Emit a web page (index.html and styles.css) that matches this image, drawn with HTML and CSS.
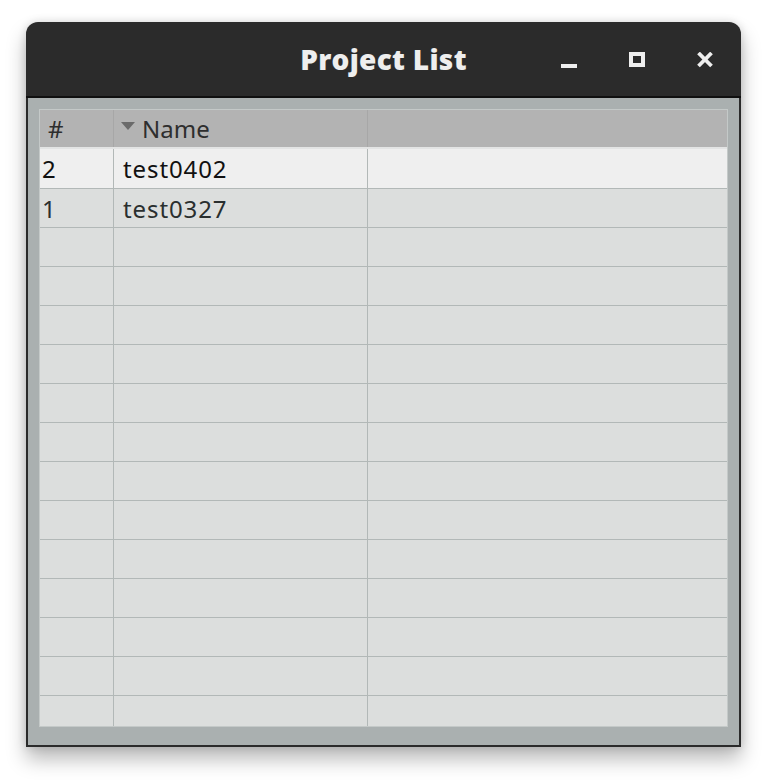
FILE: index.html
```html
<!DOCTYPE html>
<html>
<head>
<meta charset="utf-8">
<title>Project List</title>
<link rel="stylesheet" href="styles.css">
</head>
<body>
<div class="window">
  <div class="titlebar">
    <div class="spacer"></div>
    <div class="title">Project List</div>
    <div class="controls">
      <div class="btn"><svg width="16" height="16" viewBox="0 0 16 16"><rect x="0" y="12" width="16" height="4" fill="#eeeeee"/></svg></div>
      <div class="btn"><svg width="16" height="16" viewBox="0 0 16 16"><rect x="2" y="2" width="12" height="11" fill="none" stroke="#eeeeee" stroke-width="4"/></svg></div>
      <div class="btn"><svg width="16" height="16" viewBox="0 0 16 16"><path d="M1.5 1 L14.5 14 M14.5 1 L1.5 14" stroke="#eeeeee" stroke-width="3.8" stroke-linecap="butt"/></svg></div>
    </div>
  </div>
  <div class="content">
    <div class="table">
      <div class="row head">
        <div class="cell c1">#</div>
        <div class="cell c2"><span class="sort"></span>Name</div>
        <div class="cell c3"></div>
      </div>
      <div class="row sel first">
        <div class="cell c1">2</div>
        <div class="cell c2">test0402</div>
        <div class="cell c3"></div>
      </div>
      <div class="row">
        <div class="cell c1">1</div>
        <div class="cell c2">test0327</div>
        <div class="cell c3"></div>
      </div>
      <div class="row"><div class="cell c1"></div><div class="cell c2"></div><div class="cell c3"></div></div>
      <div class="row"><div class="cell c1"></div><div class="cell c2"></div><div class="cell c3"></div></div>
      <div class="row"><div class="cell c1"></div><div class="cell c2"></div><div class="cell c3"></div></div>
      <div class="row"><div class="cell c1"></div><div class="cell c2"></div><div class="cell c3"></div></div>
      <div class="row"><div class="cell c1"></div><div class="cell c2"></div><div class="cell c3"></div></div>
      <div class="row"><div class="cell c1"></div><div class="cell c2"></div><div class="cell c3"></div></div>
      <div class="row"><div class="cell c1"></div><div class="cell c2"></div><div class="cell c3"></div></div>
      <div class="row"><div class="cell c1"></div><div class="cell c2"></div><div class="cell c3"></div></div>
      <div class="row"><div class="cell c1"></div><div class="cell c2"></div><div class="cell c3"></div></div>
      <div class="row"><div class="cell c1"></div><div class="cell c2"></div><div class="cell c3"></div></div>
      <div class="row"><div class="cell c1"></div><div class="cell c2"></div><div class="cell c3"></div></div>
      <div class="row"><div class="cell c1"></div><div class="cell c2"></div><div class="cell c3"></div></div>
      <div class="row"><div class="cell c1"></div><div class="cell c2"></div><div class="cell c3"></div></div>
    </div>
  </div>
</div>
</body>
</html>
```

FILE: styles.css
```css
html, body {
  margin: 0;
  padding: 0;
  background: #ffffff;
}
body {
  min-height: 780px;
  box-sizing: border-box;
  padding: 22px 0 0 26px;
  font-family: "Noto Sans", "DejaVu Sans", sans-serif;
}
.window {
  width: 715px;
  height: 725px;
  box-sizing: border-box;
  background: #2b2b2b;
  border-radius: 12px 12px 0 0;
  display: flex;
  flex-direction: column;
  box-shadow: 0 12px 20px rgba(0, 0, 0, 0.28), 0 0 8px rgba(0, 0, 0, 0.14);
}
.titlebar {
  height: 74px;
  flex: none;
  border-bottom: 2px solid #101010;
  display: grid;
  grid-template-columns: 1fr auto 1fr;
  align-items: center;
}
.title {
  font-family: "Open Sans", "Noto Sans", sans-serif;
  font-weight: 800;
  font-size: 28px;
  color: #eeeeee;
  letter-spacing: 0.3px;
  padding-bottom: 1px;
}
.controls {
  display: flex;
  justify-content: flex-end;
  padding-right: 2px;
  height: 74px;
}
.btn {
  width: 68px;
  height: 74px;
  display: flex;
  align-items: center;
  justify-content: center;
}
.btn svg {
  display: block;
  margin-top: 1px;
}
.content {
  flex: 1;
  min-height: 0;
  margin: 0 2px 2px;
  background: #aab0b0;
  padding: 11px 11px 18px;
  display: flex;
  flex-direction: column;
}
.table {
  flex: 1;
  min-height: 0;
  overflow: hidden;
  border: 1px solid #c4c9c8;
  background: #dcdedd;
  display: flex;
  flex-direction: column;
}
.row {
  display: flex;
  flex: none;
  height: 38px;
  border-bottom: 1px solid #b2b8b7;
}
.row.first {
  height: 39px;
}
.row.head {
  height: 37px;
  background: #b3b3b3;
  border-bottom: 2px solid #e3e4e4;
}
.row.sel {
  background: #efefef;
}
.cell {
  box-sizing: border-box;
  display: flex;
  align-items: center;
  font-size: 24px;
  color: #2a2f2f;
  border-right: 1px solid #b2b8b7;
  white-space: nowrap;
}
.c1 {
  width: 74px;
  padding-left: 2px;
}
.c2 {
  width: 254px;
  padding-left: 9px;
  letter-spacing: 0.9px;
}
.c3 {
  flex: 1;
  border-right: none;
}
.row.sel .cell {
  color: #111111;
}
.row.head .cell {
  color: #2e2e2e;
  border-right-color: #a7a7a7;
  letter-spacing: 0;
}
.row.head .c1 {
  padding-left: 8px;
}
.row.head .c2 {
  padding-left: 7px;
}
.row.head .c3 {
  border-right: none;
}
.sort {
  width: 0;
  height: 0;
  border-left: 7px solid transparent;
  border-right: 7px solid transparent;
  border-top: 8px solid #6a6a6a;
  margin-right: 7px;
  margin-top: -6px;
}
```
